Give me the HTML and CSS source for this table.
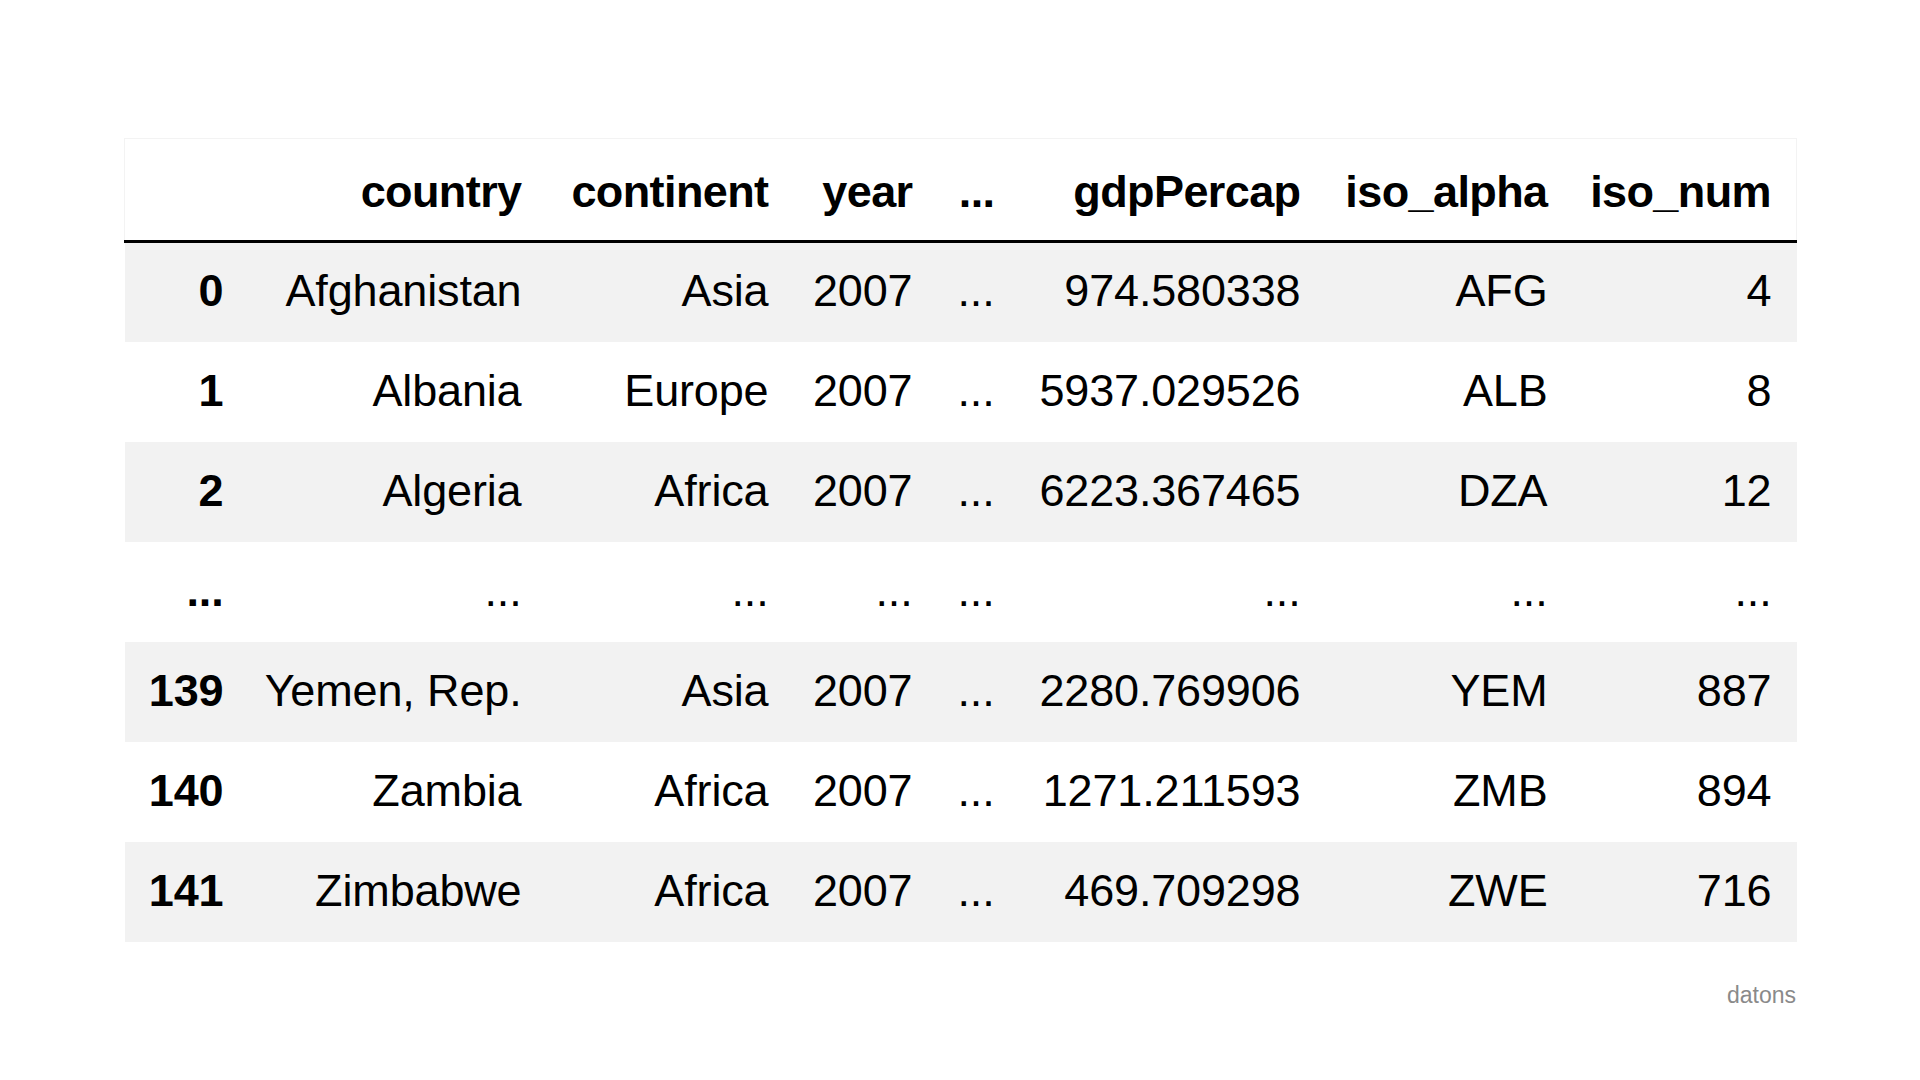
FILE: index.html
```html
<!DOCTYPE html>
<html>
<head>
<meta charset="utf-8">
<link rel="stylesheet" href="styles.css">
</head>
<body>
<main class="page">
  <table class="df">
    <colgroup>
      <col class="c-idx"><col class="c-country"><col class="c-cont"><col class="c-year"><col class="c-dots"><col class="c-gdp"><col class="c-alpha"><col class="c-num">
    </colgroup>
    <thead>
      <tr>
        <th></th><th>country</th><th>continent</th><th>year</th><th>...</th><th>gdpPercap</th><th>iso_alpha</th><th>iso_num</th>
      </tr>
    </thead>
    <tbody>
      <tr><th>0</th><td>Afghanistan</td><td>Asia</td><td>2007</td><td>...</td><td>974.580338</td><td>AFG</td><td>4</td></tr>
      <tr><th>1</th><td>Albania</td><td>Europe</td><td>2007</td><td>...</td><td>5937.029526</td><td>ALB</td><td>8</td></tr>
      <tr><th>2</th><td>Algeria</td><td>Africa</td><td>2007</td><td>...</td><td>6223.367465</td><td>DZA</td><td>12</td></tr>
      <tr><th>...</th><td>...</td><td>...</td><td>...</td><td>...</td><td>...</td><td>...</td><td>...</td></tr>
      <tr><th>139</th><td>Yemen, Rep.</td><td>Asia</td><td>2007</td><td>...</td><td>2280.769906</td><td>YEM</td><td>887</td></tr>
      <tr><th>140</th><td>Zambia</td><td>Africa</td><td>2007</td><td>...</td><td>1271.211593</td><td>ZMB</td><td>894</td></tr>
      <tr><th>141</th><td>Zimbabwe</td><td>Africa</td><td>2007</td><td>...</td><td>469.709298</td><td>ZWE</td><td>716</td></tr>
    </tbody>
  </table>
  <div class="credit">datons</div>
</main>
</body>
</html>
```

FILE: styles.css
```css
html, body {
  margin: 0;
  padding: 0;
  background: #ffffff;
}
.page {
  width: 1672px;
  margin: 0 0 0 124px;
  padding-top: 138px;
  display: flex;
  flex-direction: column;
  font-family: "Liberation Sans", Arial, sans-serif;
  color: #000;
}
.df {
  width: 1672px;
  table-layout: fixed;
  border-collapse: collapse;
  border-spacing: 0;
  font-size: 45px;
}
.c-idx { width: 121px; }
.c-country { width: 298px; }
.c-cont { width: 247px; }
.c-year { width: 144px; }
.c-dots { width: 82px; }
.c-gdp { width: 306px; }
.c-alpha { width: 247px; }
.c-num { width: 227px; }

.df th, .df td {
  padding: 0 22px 3px 10px;
  text-align: right;
  vertical-align: middle;
  white-space: nowrap;
  line-height: 1;
  letter-spacing: -0.15px;
}
.df th:last-child, .df td:last-child {
  padding-right: 25px;
}
.df th {
  font-weight: bold;
}
.df thead th {
  letter-spacing: -0.6px;
  padding-top: 4px;
  padding-bottom: 0;
}
.df td {
  font-weight: normal;
}
.df thead tr {
  height: 103px;
  background: #fff;
  border-top: 1px solid #f3f3f3;
  border-left: 1px solid #f3f3f3;
  border-right: 1px solid #f3f3f3;
  border-bottom: 3px solid #000;
}
.df tbody tr {
  height: 100px;
}
.df tbody tr:nth-child(odd) {
  background: #f2f2f2;
}
.df tbody tr:nth-child(even) {
  background: #fff;
}
.credit {
  align-self: flex-end;
  margin-top: 40px;
  font-size: 23px;
  color: #8a8a8a;
}
```
